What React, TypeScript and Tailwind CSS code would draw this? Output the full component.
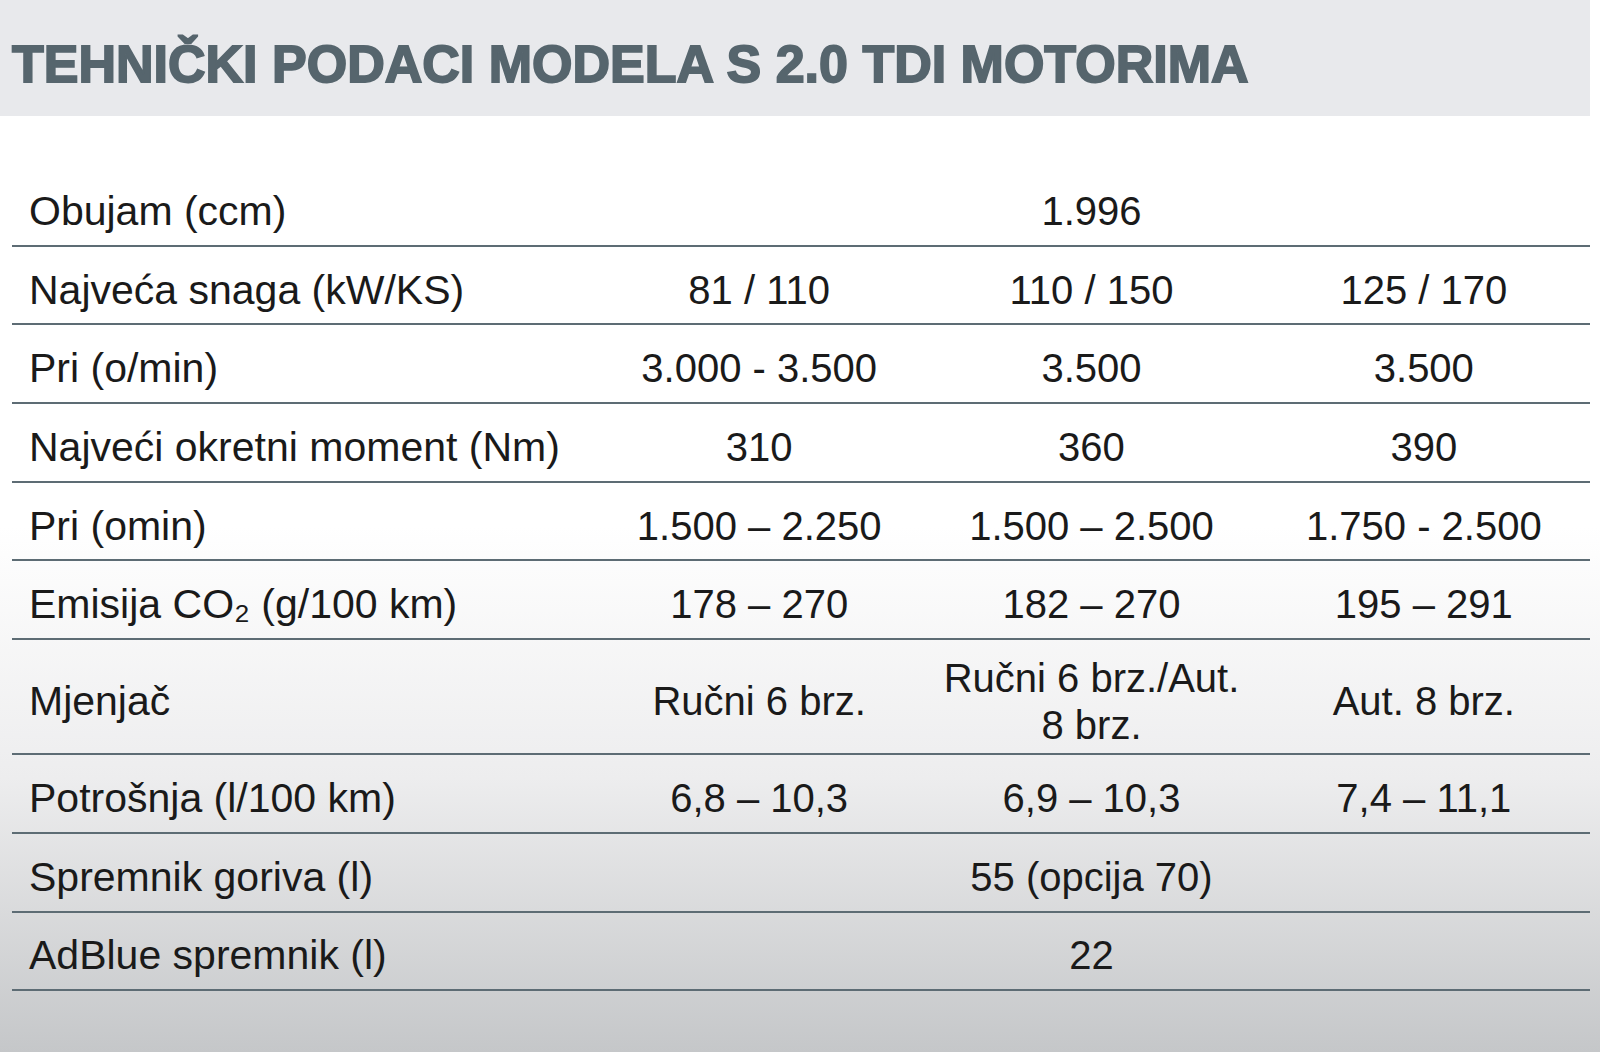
const rows: { label: string; values: string[]; tall?: boolean }[] = [
  { label: "Obujam (ccm)", values: ["", "1.996", ""] },
  { label: "Najveća snaga (kW/KS)", values: ["81 / 110", "110 / 150", "125 / 170"] },
  { label: "Pri (o/min)", values: ["3.000 - 3.500", "3.500", "3.500"] },
  { label: "Najveći okretni moment (Nm)", values: ["310", "360", "390"] },
  { label: "Pri (omin)", values: ["1.500 – 2.250", "1.500 – 2.500", "1.750 - 2.500"] },
  { label: "Emisija CO₂ (g/100 km)", values: ["178 – 270", "182 – 270", "195 – 291"] },
  { label: "Mjenjač", values: ["Ručni 6 brz.", "Ručni 6 brz./Aut.\n8 brz.", "Aut. 8 brz."], tall: true },
  { label: "Potrošnja (l/100 km)", values: ["6,8 – 10,3", "6,9 – 10,3", "7,4 – 11,1"] },
  { label: "Spremnik goriva (l)", values: ["", "55 (opcija 70)", ""] },
  { label: "AdBlue spremnik (l)", values: ["", "22", ""] },
]

export default function App() {
  return (
    <div className="w-[1600px] h-[1052px] overflow-hidden bg-linear-to-b from-white from-[50%] via-[#ededee] via-[74%] to-[#c5c7c9] font-['Liberation_Sans',Arial,sans-serif]">
      <div className="w-[1590px] h-[116px] bg-[#e8e9ec] pl-[12px] pt-[38px]">
        <h1 className="text-[52px] leading-none font-bold text-[#56656d] [-webkit-text-stroke:1.8px_#56656d]">
          TEHNIČKI PODACI MODELA S 2.0 TDI MOTORIMA
        </h1>
      </div>

      <div className="ml-[12px] mt-[52px] w-[1578px]">
        {rows.map((row, i) => (
          <div
            key={i}
            className={`grid grid-cols-[581px_1fr_1fr_1fr] items-center border-b-2 border-[#5d6c74] text-[#1a1a1a] pt-[10px] ${
              row.tall ? "h-[115px] pt-[6px]" : "h-[78.7px]"
            }`}
          >
            <div className="pl-[17px] leading-none text-[41px]">{row.label}</div>
            {row.values.map((v, j) => (
              <div key={j} className="text-center text-[40px] leading-[47px] whitespace-pre-line">
                {v}
              </div>
            ))}
          </div>
        ))}
      </div>
    </div>
  )
}
